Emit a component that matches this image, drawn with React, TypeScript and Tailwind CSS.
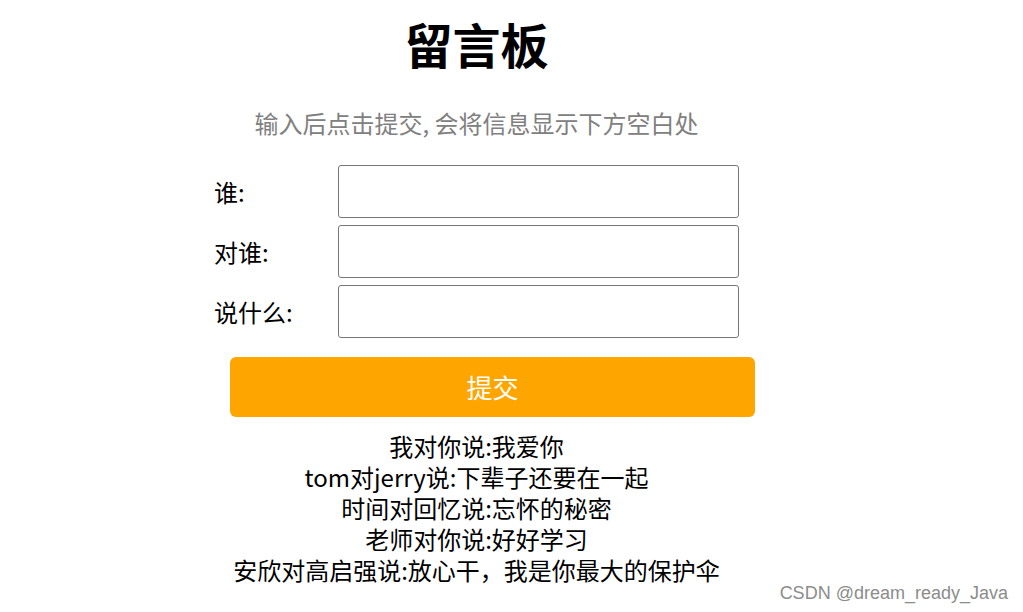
import { useState } from "react";

const initialMessages = [
  { from: "我", to: "你", msg: "我爱你" },
  { from: "tom", to: "jerry", msg: "下辈子还要在一起" },
  { from: "时间", to: "回忆", msg: "忘怀的秘密" },
  { from: "老师", to: "你", msg: "好好学习" },
  { from: "安欣", to: "高启强", msg: "放心干，我是你最大的保护伞" },
];

const font = { fontFamily: '"Noto Sans CJK SC", "Noto Sans", sans-serif' };

function Row({ label, value, onChange }: { label: string; value: string; onChange: (v: string) => void }) {
  return (
    <div className="flex items-center h-[53px]">
      <span className="w-[124px] text-[24px] leading-[32px] text-black">{label}</span>
      <input
        value={value}
        onChange={(e) => onChange(e.target.value)}
        className="w-[401px] h-[53px] border border-[#767676] rounded-[3px] px-2 text-[20px] outline-none"
      />
    </div>
  );
}

export default function App() {
  const [from, setFrom] = useState("");
  const [to, setTo] = useState("");
  const [msg, setMsg] = useState("");
  const [messages, setMessages] = useState(initialMessages);

  const submit = () => {
    if (!from || !to || !msg) return;
    setMessages([...messages, { from, to, msg }]);
    setFrom("");
    setTo("");
    setMsg("");
  };

  return (
    <div className="relative w-[1023px] h-[612px] bg-white overflow-hidden" style={font}>
      <div className="w-[953px] flex flex-col items-center pt-[11px]">
        <h1 className="text-[48px] leading-[64px] font-bold text-black">留言板</h1>
        <p className="mt-[32px] text-[24px] leading-[32px] text-[#808080]">输入后点击提交, 会将信息显示下方空白处</p>
        <div className="mt-[26px] flex flex-col gap-[7px] w-[525px]">
          <Row label="谁:" value={from} onChange={setFrom} />
          <Row label="对谁:" value={to} onChange={setTo} />
          <Row label="说什么:" value={msg} onChange={setMsg} />
        </div>
        <button
          onClick={submit}
          className="mt-[19px] ml-[32px] w-[525px] h-[60px] rounded-[6px] bg-[#ffa500] text-white text-[26px] leading-[34px]"
        >
          提交
        </button>
        <div className="mt-[13px] flex flex-col items-center text-[24px] leading-[31px] text-black">
          {messages.map((m, i) => (
            <div key={i} className="h-[31px]">
              {m.from}对{m.to}说:{m.msg}
            </div>
          ))}
        </div>
      </div>
      <div
        className="absolute right-[15px] bottom-[8px] text-[18px] leading-[22px] text-[#8c8c8c]"
        style={{ fontFamily: '"Liberation Sans", Arial, sans-serif' }}
      >
        CSDN @dream_ready_Java
      </div>
    </div>
  );
}
